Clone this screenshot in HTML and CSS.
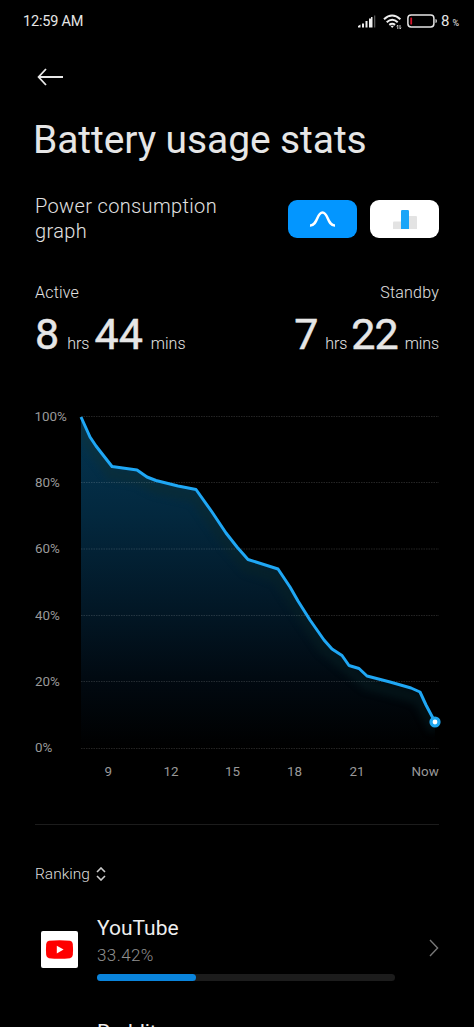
FILE: index.html
```html
<!DOCTYPE html>
<html lang="en">
<head>
    <meta charset="UTF-8">
    <meta name="viewport" content="width=device-width, initial-scale=1.0">
    <title>Battery usage stats</title>
    <link rel="stylesheet" href="styles.css">
</head>
<body>
<div class="status-bar">
    <span class="clock">12:59 AM</span>
    <div class="status-icons">
        <svg class="signal" width="18" height="13" viewBox="0 0 18 13">
            <path d="M0 12.5V11l2.5-1.5v3zM4 8.5h2v4H4zM7.5 6h2v6.5h-2zM11 3.5h2v9h-2z" fill="#eee"/>
            <path d="M13 2h1.5v10.5H13z" fill="#eee"/>
            <path d="M16 0.5h1.3v12H16z" fill="#555"/>
        </svg>
        <svg class="wifi" width="20" height="16" viewBox="0 0 20 16">
            <g fill="none" stroke="#eee" stroke-width="2">
                <path d="M1 5.2q8-7.4 16.4 0"/>
                <path d="M3.7 8.2q5.5-4.8 11 0"/>
                <path d="M6.3 10.9q2.9-2.3 5.8 0"/>
            </g>
            <path d="M7.4 11.8h3.6l-1.8 2.2z" fill="#eee"/>
            <path d="M14.8 15v-4l-1.1 1.3M17 11v4l1.1-1.3" fill="none" stroke="#ddd" stroke-width="0.9"/>
        </svg>
        <svg class="battery" width="31" height="14" viewBox="0 0 31 14">
            <rect x="0.9" y="0.9" width="26" height="12" rx="3.2" fill="none" stroke="#e6e6e6" stroke-width="1.5"/>
            <rect x="3.3" y="3.5" width="1.8" height="7" rx="0.6" fill="#d4142a"/>
            <path d="M28.5 5q1.4 0 1.4 2t-1.4 2z" fill="#e6e6e6"/>
        </svg>
        <span class="level">8</span><span class="percent">%</span>
    </div>
</div>

<main class="page">
    <svg class="back" width="27" height="20" viewBox="0 0 27 20">
        <path d="M9 2L1.6 10L9 18M1.6 10H26" fill="none" stroke="#e8e8e8" stroke-width="1.8"/>
    </svg>
    <h1>Battery usage stats</h1>

    <div class="graph-head">
        <h2>Power consumption<br>graph</h2>
        <div class="toggles">
            <div class="toggle active">
                <svg width="27" height="16" viewBox="0 0 27 16">
                    <path d="M1 14.4C9 14.8 7.5 1.5 13.5 1.5S18 14.8 26 14.4" fill="none" stroke="#fff" stroke-width="2.5"/>
                </svg>
            </div>
            <div class="toggle">
                <svg width="24" height="19" viewBox="0 0 24 19">
                    <path d="M0 12.5q0-1 1-1h7V19H0z" fill="#e3e3e3"/>
                    <path d="M16 6h7q1 0 1 1v12h-8z" fill="#e3e3e3"/>
                    <path d="M8 1.2Q8 0 9.2 0h5.6Q16 0 16 1.2V19H8z" fill="#1ba5f8"/>
                </svg>
            </div>
        </div>
    </div>

    <div class="totals">
        <div class="total">
            <div class="total-label">Active</div>
            <div class="time"><b>8</b><span class="unit">hrs</span><b class="next">44</b><span class="unit">mins</span></div>
        </div>
        <div class="total standby">
            <div class="total-label">Standby</div>
            <div class="time"><b>7</b><span class="unit">hrs</span><b class="next">22</b><span class="unit">mins</span></div>
        </div>
    </div>

    <svg class="chart" width="410" height="380" viewBox="35 405 410 380">
        <defs>
            <linearGradient id="area" x1="0" y1="417" x2="0" y2="748" gradientUnits="userSpaceOnUse">
                <stop offset="0" stop-color="#043551"/>
                <stop offset="0.3" stop-color="#03283e"/>
                <stop offset="0.6" stop-color="#021624"/>
                <stop offset="0.8" stop-color="#010910"/>
                <stop offset="1" stop-color="#000"/>
            </linearGradient>
            <linearGradient id="glow" x1="0" y1="417" x2="0" y2="748" gradientUnits="userSpaceOnUse">
                <stop offset="0" stop-color="#0a3546"/>
                <stop offset="0.5" stop-color="#051f29"/>
                <stop offset="1" stop-color="#020c0e"/>
            </linearGradient>
            <clipPath id="under">
                <path d="M81 417L90 437L96 446L112 466.500L137 470L147 477L156 480.500L178 486L196 489.500L212 512L226 533L237 547L248 559.500L278 569L290 587L298 601L310 620L324 640L332 649L342 655.500L349 665.500L359 668.500L367 676L390 682L411 688L420 692L426 705L435 722V748H81z"/>
            </clipPath>
            <filter id="soft" color-interpolation-filters="sRGB"><feGaussianBlur stdDeviation="3"/></filter>
        </defs>
        <g clip-path="url(#under)">
            <rect x="81" y="417" width="354" height="331" fill="url(#area)"/>
            <path class="shadow" filter="url(#soft)" d="M81 424L90 444L112 474L137 478L156 488L196 497L226 541L248 567L278 577L298 609L324 648L342 663L367 684L411 696L420 700L435 730"/>
        </g>
        <g class="grid">
            <path d="M81 416.500H439M81 482.500H439M81 549H439M81 615.500H439M81 681.500H439M81 748.500H439"/>
        </g>
        <path class="line" d="M81 417L90 437L96 446L112 466.500L137 470L147 477L156 480.500L178 486L196 489.500L212 512L226 533L237 547L248 559.500L278 569L290 587L298 601L310 620L324 640L332 649L342 655.500L349 665.500L359 668.500L367 676L390 682L411 688L420 692L426 705L435 722"/>
        <circle cx="435" cy="722" r="4" fill="#fff" stroke="#1fa7f0" stroke-width="3.200"/>
        <g class="axis">
            <text x="34.500" y="420.500">100%</text>
            <text x="35" y="487">80%</text>
            <text x="35" y="553">60%</text>
            <text x="35" y="619.500">40%</text>
            <text x="35" y="686">20%</text>
            <text x="35" y="752">0%</text>
            <text x="104.500" y="775.500">9</text>
            <text x="163.500" y="775.500">12</text>
            <text x="225" y="775.500">15</text>
            <text x="287" y="775.500">18</text>
            <text x="349.500" y="775.500">21</text>
            <text x="411.500" y="775.500">Now</text>
        </g>
    </svg>

    <div class="ranking">
        <span>Ranking</span>
        <svg width="10" height="14" viewBox="0 0 10 14">
            <path d="M1 5l4-4 4 4M1 9l4 4 4-4" fill="none" stroke="#ccc" stroke-width="1.6"/>
        </svg>
    </div>

    <div class="app">
        <svg class="app-icon" width="37" height="37" viewBox="0 0 37 37">
            <rect width="37" height="37" rx="2" fill="#fff"/>
            <path d="M8 9.800Q18.500 8.800 29 9.800Q31.500 10.200 31.800 13Q32.300 18.500 31.800 24Q31.500 26.800 29 27.200Q18.500 28.200 8 27.200Q5.500 26.800 5.200 24Q4.700 18.500 5.200 13Q5.500 10.200 8 9.800z" fill="#f00"/>
            <path d="M15.800 14.700l6.800 3.900-6.800 3.900z" fill="#fff"/>
        </svg>
        <div class="app-info">
            <div class="app-name">YouTube</div>
            <div class="app-share">33.42%</div>
            <div class="bar"><div class="bar-fill" style="width:33.1%"></div></div>
        </div>
        <svg class="chevron" width="10" height="18" viewBox="0 0 10 18">
            <path d="M1 1l7.600 8L1 17" fill="none" stroke="#777" stroke-width="1.400"/>
        </svg>
    </div>
    <div class="app next-app">
        <div class="app-info">
            <div class="app-name">Reddit</div>
        </div>
    </div>
</main>
</body>
</html>
```

FILE: styles.css
```css
*{box-sizing:border-box;}
body{
    margin:0; height:1027px; overflow:hidden;
    background:#000; color:#e6e6e6;
    font-family:Roboto, "Open Sans", sans-serif;
}
svg{display:block;flex:none;}
.status-bar{
    display:flex;align-items:center;justify-content:space-between;
    height:42px;padding:0 15px 0 23px;
}
.clock{font-size:14.5px;letter-spacing:-0.2px;}
.status-icons{display:flex;align-items:center;}
.wifi{margin:1px 0 0 7px;}
.battery{margin-left:4px;}
.level{font-size:15px;margin-left:3px;}
.percent{font-size:9px;margin:4px 0 0 3px;}

.page{padding:0 35px;}
.back{margin:25px 0 0 2px;}
h1{
    margin:29px 0 0 -2px;font-size:39px;line-height:48px;
    font-weight:400;letter-spacing:-0.1px;white-space:nowrap;
}
.graph-head{display:flex;justify-content:space-between;margin-top:30px;}
h2{margin:0;font-size:20px;line-height:25px;font-weight:300;color:#e2e2e2;letter-spacing:0.35px;}
.toggles{display:flex;gap:13px;margin-top:6px;}
.toggle{
    display:flex;align-items:center;justify-content:center;
    width:69px;height:38px;border-radius:9px;background:#fff;
}
.toggle.active{background:#0396ff;}

.totals{display:flex;justify-content:space-between;margin-top:39px;}
.total-label{font-size:16px;line-height:20px;font-weight:300;color:#e2e2e2;letter-spacing:0.2px;}
.standby{text-align:right;}
.time{display:flex;align-items:baseline;height:50px;margin-top:6px;line-height:50px;}
.time b{font-size:43px;font-weight:400;-webkit-text-stroke:0.5px #e6e6e6;}
.time .next{margin-left:5px;}
.unit{font-size:16px;font-weight:300;margin-left:8px;}
.standby .time{justify-content:flex-end;}
.standby .next{margin-left:4px;letter-spacing:-1px;}
.standby .unit{letter-spacing:-0.1px;margin-left:7px;}

.chart{margin-top:46px;}
.grid path{stroke:#fff;stroke-opacity:0.14;stroke-width:1;stroke-dasharray:1.5 1;}
.line{fill:none;stroke:#1fa7f5;stroke-width:3;stroke-linejoin:round;}
.shadow{fill:none;stroke:url(#glow);stroke-width:12;}
.axis text{font-size:13.4px;font-weight:400;fill:#999;}

.ranking{
    display:flex;align-items:center;gap:6px;
    margin-top:39px;padding-top:38px;border-top:1px solid #1c1c1c;
    font-size:15.5px;line-height:22px;font-weight:300;color:#ddd;
}
.app{display:flex;align-items:center;margin-top:29px;}
.app-icon{margin:3px 0 0 6px;}
.app-info{width:298px;margin-left:19px;}
.app-name{font-size:21px;line-height:28px;color:#eee;}
.app-share{font-size:17px;line-height:27px;font-weight:300;color:#909090;letter-spacing:0.4px;}
.bar{height:7px;margin-top:5px;border-radius:4px;background:#1c1c1c;}
.bar-fill{height:7px;border-radius:4px;background:#0a84dc;}
.chevron{margin-left:34px;}
.next-app{padding-left:43px;margin-top:37px;}
```
